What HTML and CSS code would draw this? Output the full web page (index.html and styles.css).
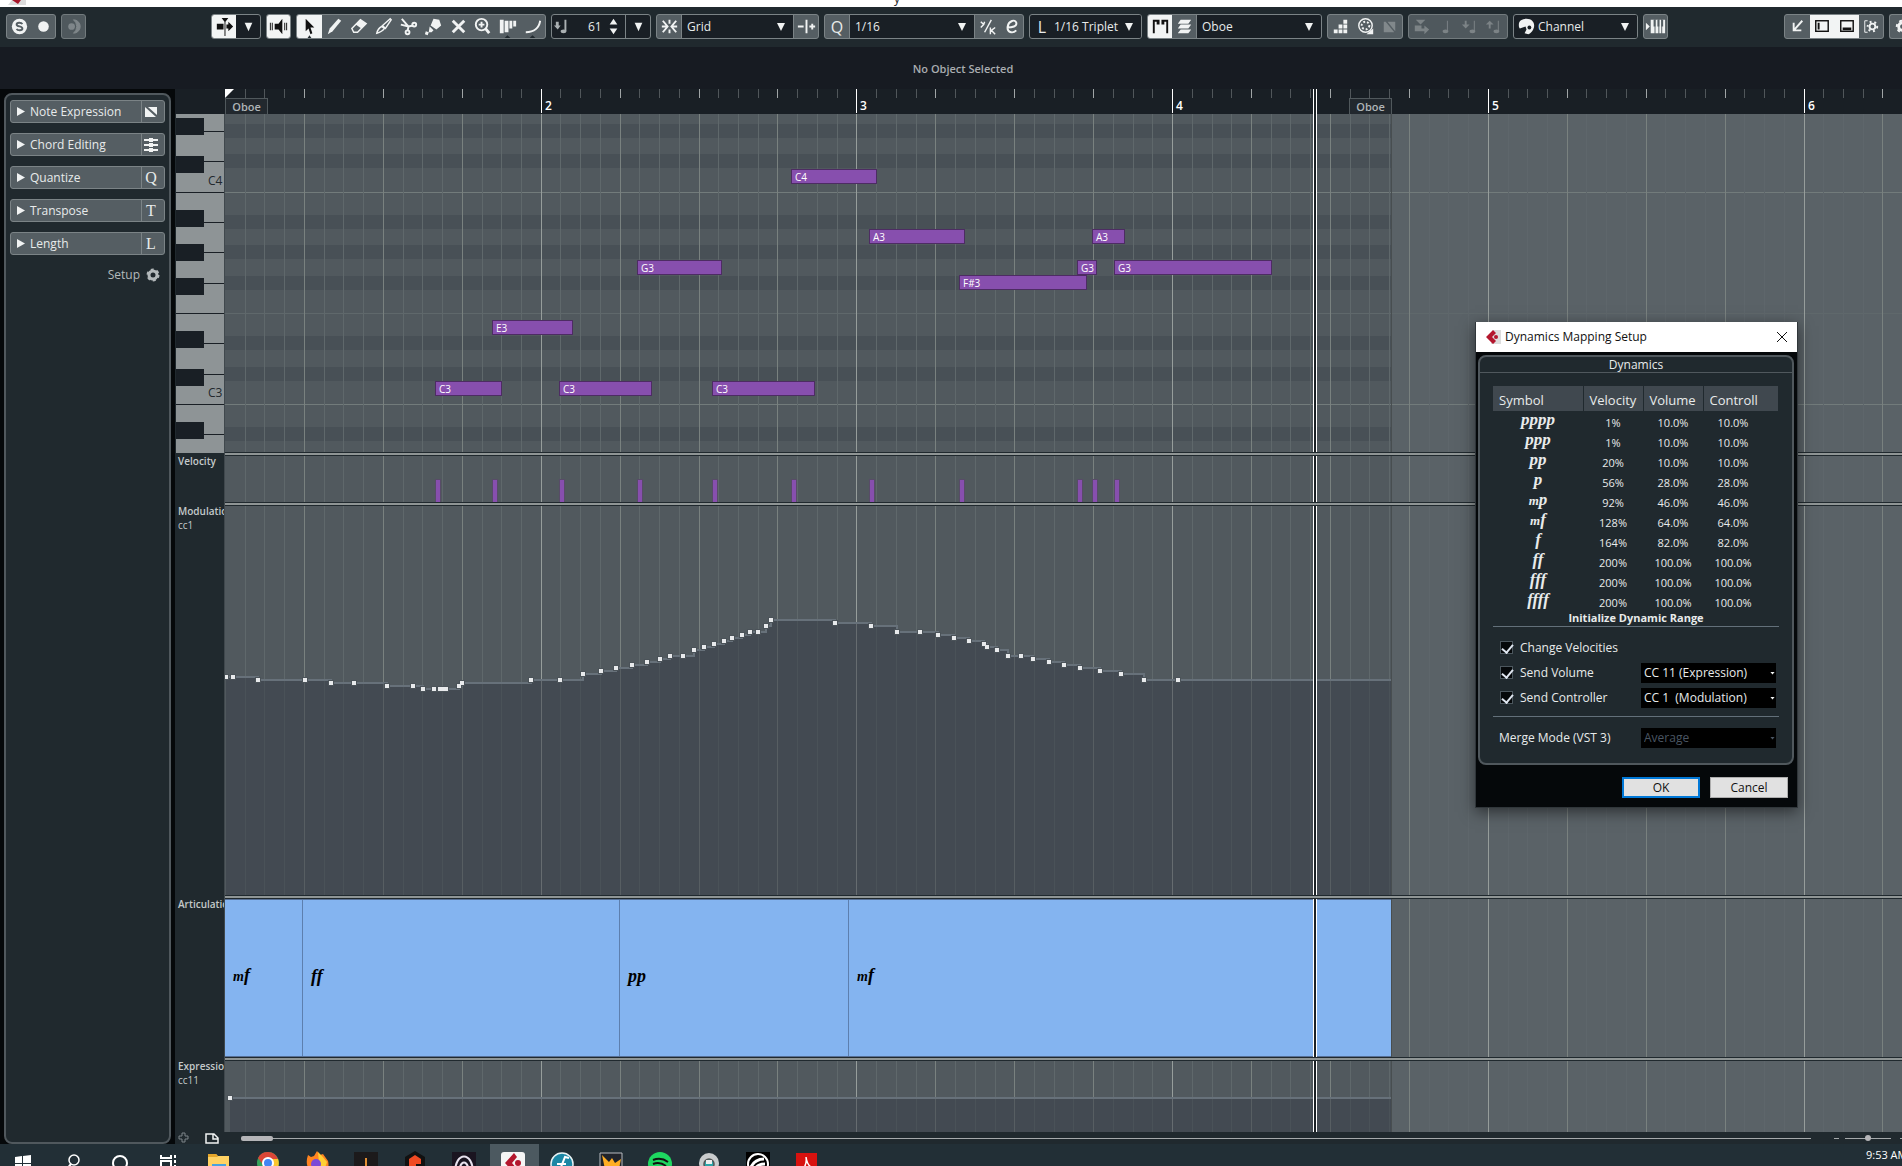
FILE: index.html
```html
<!DOCTYPE html>
<html lang="en">
<head>
  <meta charset="UTF-8" />
  <meta name="viewport" content="width=device-width, initial-scale=1.0" />
  <title>Key Editor</title>
  <link rel="stylesheet" href="styles.css">
</head>
<body>
  <div class="titlebar">
    <svg class="title-icon" width="18" height="7" viewBox="0 0 18 7"><path d="M4 0h14v5H0z" fill="#ddd"/><path d="M4 0h9l-3 4-3-2z" fill="#a8172b"/></svg>
    <span class="title-text">y</span>
  </div>

  <header class="toolbar">
    <div class="group w50">
      <button aria-label="Solo"><svg viewBox="0 0 24 24"><circle cx="12" cy="12" r="8" fill="#f1f3f3"/><path d="M15 9.500c-1-2-6-2-6 .3 0 2.600 6 1.600 6 4.300 0 2.400-5 2.400-6 .3" fill="none" stroke="#555e63" stroke-width="2"/></svg></button>
      <button aria-label="Record"><svg viewBox="0 0 24 24"><circle cx="12" cy="12" r="5.500" fill="#f1f3f3"/></svg></button>
    </div>
    <div class="group off w25">
      <button aria-label="Retrospective record"><svg viewBox="0 0 24 24"><circle cx="10" cy="12" r="3.500" fill="#8a9194"/><path d="M12 5a7 7 0 0 1 0 14 9 9 0 0 0 0-14z" fill="#8a9194" stroke="#8a9194"/></svg></button>
    </div>

    <div class="group dark w50 after-space">
      <button class="on" aria-label="Auto-scroll"><svg viewBox="0 0 24 24"><path d="M4 9h7v6H4zM9 3h7l-3 4v15h-1V7zM14 10h2V7l5 5-5 5v-3h-2z" fill="#111"/></svg></button>
      <button aria-label="Auto-scroll options"><svg viewBox="0 0 24 24"><path d="M8 8h8l-4 9z" fill="#f1f3f3"/></svg></button>
    </div>
    <div class="group w25">
      <button class="on" aria-label="Acoustic feedback"><svg viewBox="0 0 24 24"><path d="M8 9h4l4-5v16l-4-5H8zM3 8h1v8H3zM5 8h1v8H5zM18 8h1v8h-1zM20 8h1v8h-1z" fill="#111"/></svg></button>
    </div>
    <div class="group w250">
      <button class="on" aria-label="Select"><svg viewBox="0 0 24 24"><path d="M8 4l9 9h-4l2 6-2 1-2-6-3 3z" fill="#111"/><path d="M10 24l2-3 2 3z" fill="#20292e"/></svg></button>
      <button aria-label="Draw"><svg viewBox="0 0 24 24"><path d="M5 20l2-6 9-10 3 2-9 11z" fill="#f1f3f3"/></svg></button>
      <button aria-label="Erase"><svg viewBox="0 0 24 24"><path d="M5 14l9-9 6 4-9 9H7z" fill="none" stroke="#f1f3f3" stroke-width="1.500"/><path d="M9 10l5-5 6 4-5 5z" fill="#f1f3f3"/></svg></button>
      <button aria-label="Trim"><svg viewBox="0 0 24 24"><path d="M5 19c1-4 3-6 5-7l3 2c-2 3-4 4-8 5zM11 11l8-7 1 1-6 9z" fill="none" stroke="#f1f3f3" stroke-width="1.500"/></svg></button>
      <button aria-label="Split"><svg viewBox="0 0 24 24"><path d="M5 4l7 8-1 5M4 10l8 2 5-1" fill="none" stroke="#f1f3f3" stroke-width="2"/><circle cx="18" cy="10" r="2" fill="none" stroke="#f1f3f3" stroke-width="2"/><circle cx="11" cy="18" r="2" fill="none" stroke="#f1f3f3" stroke-width="2"/></svg></button>
      <button aria-label="Glue"><svg viewBox="0 0 24 24"><path d="M12 4l6 1 2 6-5 4-6-4zM8 12l4 4-2 2H7zM4 17l3 1-1 3-3-1z" fill="#f1f3f3"/></svg></button>
      <button aria-label="Mute"><svg viewBox="0 0 24 24"><path d="M6 6l12 12M18 6L6 18" stroke="#f1f3f3" stroke-width="3"/></svg></button>
      <button aria-label="Zoom"><svg viewBox="0 0 24 24"><circle cx="11" cy="10" r="6" fill="none" stroke="#f1f3f3" stroke-width="2"/><path d="M8 10h6M11 7v6" stroke="#f1f3f3" stroke-width="2"/><path d="M15 14l4 5" stroke="#f1f3f3" stroke-width="3"/></svg></button>
      <button aria-label="Time warp"><svg viewBox="0 0 24 24"><path d="M4 5h4v14H4zM9 6h4v12H9zM14 6h3v8h-3zM18 6h3v6h-3z" fill="#f1f3f3"/><path d="M9 24l3-3 3 3z" fill="#20292e"/></svg></button>
      <button aria-label="Line"><svg viewBox="0 0 24 24"><path d="M5 18c9 0 14-5 15-12" fill="none" stroke="#f1f3f3" stroke-width="2"/><path d="M9 24l3-3 3 3z" fill="#20292e"/></svg></button>
    </div>

    <div class="group dark w100">
      <label class="mark" for="vel"><svg viewBox="0 0 24 24"><path d="M4 7h3v4h2l-3 4-4-4h2z" fill="#aab0b2"/><path d="M14 5v12" stroke="#aab0b2" stroke-width="2"/><ellipse cx="12" cy="17" rx="3" ry="2" fill="#aab0b2"/></svg></label>
      <input class="vel" id="vel" type="text" value="61">
      <button class="spin" aria-label="Change velocity"><svg viewBox="0 0 24 24"><path d="M8 10l4-6 4 6zM8 14h8l-4 6z" fill="#f1f3f3"/></svg></button>
      <button class="cell" aria-label="Velocity presets"><svg viewBox="0 0 24 24"><path d="M8 8h8l-4 9z" fill="#f1f3f3"/></svg></button>
    </div>

    <div class="group w163">
      <button aria-label="Snap"><svg viewBox="0 0 24 24"><path d="M12 5v4M12 15v4M5 6l5 6-5 6M19 6l-5 6 5 6M4 12h5M15 12h5" fill="none" stroke="#f1f3f3" stroke-width="2"/></svg></button>
      <div class="drop"><select aria-label="Snap type"><option>Grid</option></select></div>
      <button aria-label="Snap relative"><svg viewBox="0 0 24 24"><path d="M3 12h6M12 5v14M15 12h6M18 9v6" fill="none" stroke="#f1f3f3" stroke-width="2"/></svg></button>
    </div>
    <div class="group w200">
      <button class="letter" aria-label="Apply quantize">Q</button>
      <div class="drop"><select aria-label="Quantize preset"><option>1/16</option></select></div>
      <button aria-label="Iterative quantize"><svg viewBox="0 0 24 24"><path d="M5 7l3 3-3 3M9 7l-1 3M16 5L9 18M15 13v7M20 13l-4 3 4 4" fill="none" stroke="#f1f3f3" stroke-width="1.500"/></svg></button>
      <button aria-label="Quantize panel"><svg viewBox="0 0 24 24"><path d="M7 13c6 0 11-1 10-5s-8-2-9 4 5 8 9 4" fill="none" stroke="#f1f3f3" stroke-width="2"/></svg></button>
    </div>
    <div class="group dark w113">
      <span class="mark letter">L</span>
      <div class="drop tight"><select aria-label="Length quantize"><option>1/16 Triplet</option></select></div>
    </div>
    <div class="group w175">
      <button class="on" aria-label="Edit active part"><svg viewBox="0 0 24 24"><path d="M4 5h7v5H8V7H6v12H4zM13 5h7v14h-2V7h-2v3h-3z" fill="#111"/></svg></button>
      <button aria-label="Part borders"><svg viewBox="0 0 24 24"><path d="M8 5h11l-3 4H5zM8 10h11l-3 4H5zM8 15h11l-3 4H5z" fill="#f1f3f3"/></svg></button>
      <div class="drop"><select aria-label="Active part"><option>Oboe</option></select></div>
    </div>
    <div class="group w76">
      <button aria-label="Step input"><svg viewBox="0 0 24 24"><path d="M5 15h4v4H5zM10 15h4v4h-4zM15 15h4v4h-4zM10 10h4v4h-4zM15 10h4v4h-4zM15 5h4v4h-4z" fill="#f1f3f3"/></svg></button>
      <button aria-label="MIDI input"><svg viewBox="0 0 24 24"><circle cx="12" cy="11" r="7" fill="none" stroke="#f1f3f3" stroke-width="1.500"/><circle cx="12" cy="11" r="4" fill="none" stroke="#f1f3f3" stroke-width="2" stroke-dasharray="2 2"/><path d="M13 20l7-6v6z" fill="#f1f3f3"/></svg></button>
      <button class="off" aria-label="Note expression input"><svg viewBox="0 0 24 24"><path d="M6 7h2l9 11H6zM10 7h8v10z" fill="#868d90"/></svg></button>
    </div>
    <div class="group off w100">
      <button aria-label="Move insert position"><svg viewBox="0 0 24 24"><path d="M6 5h10l-5 5zM5 11h7v3h3v-3l5 4-5 5v-3H5z" fill="#868d90"/></svg></button>
      <button aria-label="Record pitch"><svg viewBox="0 0 24 24"><path d="M14 6v11" stroke="#868d90"/><ellipse cx="12" cy="17" rx="3" ry="2" fill="#868d90"/></svg></button>
      <button aria-label="Record velocity"><svg viewBox="0 0 24 24"><path d="M6 6h2v4h3l-4 4-4-4h3z" fill="#868d90"/><path d="M16 6v11" stroke="#868d90"/><ellipse cx="14" cy="17" rx="3" ry="2" fill="#868d90"/></svg></button>
      <button aria-label="Record release velocity"><svg viewBox="0 0 24 24"><path d="M6 14h2v-4h3L7 6l-4 4h3z" fill="#868d90"/><path d="M16 6v11" stroke="#868d90"/><ellipse cx="14" cy="17" rx="3" ry="2" fill="#868d90"/></svg></button>
    </div>
    <div class="group dark w125">
      <span class="mark"><svg viewBox="0 0 24 24"><path d="M4 10c0-4 4-6 8-6 5 0 8 3 8 7s-3 8-6 9l-4-1 2-4-1-3-3 1-3 1c-1-1-1-2-1-4z" fill="#f1f3f3"/><circle cx="15" cy="13" r="2" fill="#191f25"/></svg></span>
      <div class="drop"><select aria-label="Event colors"><option>Channel</option></select></div>
    </div>
    <div class="group w25">
      <button aria-label="Edit VST instrument"><svg viewBox="0 0 24 24"><path d="M2 8l4 4-4 4zM7 5h4v14H7zM12 5h3v14h-3zM16 5h2v14h-2zM19 5h3v14h-3z" fill="#f1f3f3"/><path d="M10 5h2v7h-2zM14 5h2v7h-2zM18 5h2v7h-2z" fill="#555e63"/></svg></button>
    </div>

    <div class="group w100 push">
      <button aria-label="Open in separate window"><svg viewBox="0 0 24 24"><path d="M17 6l-8 9M8 8v8h8" fill="none" stroke="#f1f3f3" stroke-width="2"/></svg></button>
      <button class="on" aria-label="Show left zone"><svg viewBox="0 0 24 24"><rect x="6" y="6" width="13" height="11" fill="none" stroke="#111" stroke-width="1.500"/><path d="M8 8h2v7H8z" fill="#111"/></svg></button>
      <button class="on" aria-label="Show lower zone"><svg viewBox="0 0 24 24"><rect x="6" y="6" width="13" height="11" fill="none" stroke="#111" stroke-width="1.500"/><path d="M8 13h9v3H8z" fill="#111"/></svg></button>
      <button aria-label="Zone setup"><svg viewBox="0 0 24 24"><path d="M9 6H6v12h3" fill="none" stroke="#f1f3f3"/><circle cx="14" cy="12" r="3" fill="none" stroke="#f1f3f3" stroke-width="2"/><circle cx="14" cy="12" r="5" fill="none" stroke="#f1f3f3" stroke-width="2" stroke-dasharray="2 3"/></svg></button>
    </div>
    <div class="group cut">
      <button aria-label="Toolbar setup"><svg viewBox="0 0 24 24"><circle cx="12" cy="12" r="4" fill="none" stroke="#f1f3f3" stroke-width="3"/><circle cx="12" cy="12" r="6" fill="none" stroke="#f1f3f3" stroke-width="2" stroke-dasharray="3 3"/></svg></button>
    </div>
  </header>

  <div class="infoline">No Object Selected</div>

  <main class="workspace">
    <aside class="side">
      <div class="inspector">
        <button class="section"><span class="name">Note Expression</span><span class="glyph"><svg width="14" height="12" viewBox="0 0 14 12"><path d="M1 1l11 10H1zM4 1h9v8z" fill="#f1f3f3"/></svg></span></button>
        <button class="section"><span class="name">Chord Editing</span><span class="glyph"><svg width="16" height="14" viewBox="0 0 16 14"><path d="M1 2h14M1 7h14M1 12h14" stroke="#f1f3f3" stroke-width="2"/><path d="M6 0h4v4H6zM6 5h4v4H6zM6 10h4v4H6z" fill="#f1f3f3"/></svg></span></button>
        <button class="section"><span class="name">Quantize</span><span class="glyph">Q</span></button>
        <button class="section"><span class="name">Transpose</span><span class="glyph">T</span></button>
        <button class="section"><span class="name">Length</span><span class="glyph">L</span></button>
        <button class="setup">Setup <svg width="14" height="14" viewBox="0 0 14 14"><circle cx="7" cy="7" r="4" fill="none" stroke="#b3b9bb" stroke-width="3"/><circle cx="7" cy="7" r="5.500" fill="none" stroke="#b3b9bb" stroke-width="2" stroke-dasharray="2.880 2.880"/></svg></button>
      </div>
    </aside>

    <section class="editor">
      <div class="row ruler-row">
        <div class="head"></div>
        <div class="ruler" id="ruler"><svg class="grid"></svg></div>
      </div>
      <div class="row piano-row">
        <div class="head"><svg id="keys" width="49" height="339"></svg></div>
        <div class="lane" id="piano"><svg class="grid"></svg></div>
      </div>
      <div class="row cc-row velocity-row">
        <div class="head"><b>Velocity</b></div>
        <div class="lane" id="velocity"><svg class="grid"></svg></div>
      </div>
      <div class="row cc-row modulation-row">
        <div class="head"><b>Modulation</b><span>cc1</span></div>
        <div class="lane" id="modulation"><svg class="grid"></svg></div>
      </div>
      <div class="row cc-row articulation-row">
        <div class="head"><b>Articulations</b></div>
        <div class="lane" id="articulation"><svg class="grid"></svg><div class="dynamics" id="dynamics"></div></div>
      </div>
      <div class="row cc-row expression-row">
        <div class="head"><b>Expression</b><span>cc11</span></div>
        <div class="lane" id="expression"><svg class="grid"></svg></div>
      </div>
      <div class="scroll-row">
        <svg width="12" height="12" viewBox="0 0 12 12"><path d="M4 1h3v3h3v3H7v3H4V7H1V4h3z" fill="none" stroke="#7d8589"/></svg>
        <svg class="page" width="14" height="12" viewBox="0 0 14 12"><path d="M1 2h8l4 4v5H1zM8 2v5h5" fill="none" stroke="#f1f3f3" stroke-width="1.500"/></svg>
        <div class="track"><div class="thumb"></div></div>
        <span class="minus"></span>
        <div class="zoom"><div class="knob"></div></div>
        <span class="plus"></span>
      </div>
    </section>
  </main>

  <footer class="taskbar">
    <a href="#" aria-label="Start"><svg viewBox="0 0 24 24"><path d="M4 7l7-1v7H4zM12 6l8-1v8h-8zM4 14h7v7H4zM12 14h8v7h-8z" fill="#fff"/></svg></a>
    <a href="#" aria-label="Search"><svg viewBox="0 0 24 24"><circle cx="14" cy="10" r="5" fill="none" stroke="#fff" stroke-width="1.500"/><path d="M11 14l-5 6" stroke="#fff" stroke-width="2"/></svg></a>
    <a href="#" aria-label="Cortana"><svg viewBox="0 0 24 24"><circle cx="11" cy="13" r="7" fill="none" stroke="#fff" stroke-width="2"/></svg></a>
    <a href="#" aria-label="Task view"><svg viewBox="0 0 24 24"><path d="M3 5v3h10V5M3 20v-9h10v9M17 5v3M17 10v3M17 15v5" fill="none" stroke="#fff" stroke-width="2"/></svg></a>
    <a href="#" aria-label="Files"><svg viewBox="0 0 24 24"><path d="M1 4h8l2 2h11v16H1z" fill="#ffd263"/><path d="M1 4h8l2 3H1z" fill="#e5a62b"/><path d="M5 14h14v8H5z" fill="#48a2df"/></svg></a>
    <a href="#" aria-label="Chrome"><svg viewBox="0 0 24 24"><circle cx="12" cy="13" r="11" fill="#34a35a"/><path d="M2 8a11 11 0 0 1 20 1H12l-4 7z" fill="#dc4637"/><path d="M22 9a11 11 0 0 1-9 15l4-10-5-5z" fill="#fbc62f"/><circle cx="12" cy="13" r="5" fill="#4285f4" stroke="#fff" stroke-width="2"/></svg></a>
    <a href="#" aria-label="Firefox"><svg viewBox="0 0 24 24"><path d="M3 5l3 2 3-1 3-5 3 4 3-1 5 7c2 7-2 13-9 13C5 24-1 16 3 5z" fill="#ff8421"/><path d="M13 2l4 4 5 6-3 9-5-8z" fill="#ffcf35"/><circle cx="11" cy="14" r="5" fill="#7b4ad8"/></svg></a>
    <a href="#" aria-label="Meter"><svg viewBox="0 0 24 24"><path d="M0 2h24v22H0z" fill="#1c1a1b"/><path d="M7 24v-6M12 24V8M17 24v-8" stroke="#e59033" stroke-width="2"/></svg></a>
    <a href="#" aria-label="Hexagon"><svg viewBox="0 0 24 24"><path d="M12 1l10 6v17H2V7z" fill="#111"/><path d="M12 5l6 4v5h-5v10H6V9z" fill="#f04a23"/></svg></a>
    <a href="#" aria-label="Arch"><svg viewBox="0 0 24 24"><path d="M0 2h24v22H0z" fill="#1a1420"/><path d="M3 23c0-22 18-22 18 0M7 23c1-14 9-14 10 0" fill="none" stroke="#e8e2ee" stroke-width="2"/></svg></a>
    <a class="active" href="#" aria-label="Cubase"><svg viewBox="0 0 24 24"><rect y="2" width="24" height="26" rx="3" fill="#f5f5f5"/><path d="M13 3L4 13l9 10 3-4-5-6 5-6z" fill="#b4172e"/><circle cx="17" cy="13" r="3" fill="#b4172e"/></svg></a>
    <a href="#" aria-label="Dorico"><svg viewBox="0 0 24 24"><circle cx="12" cy="14" r="11" fill="#1b87a5" stroke="#e8f2f4" stroke-width="1.500"/><path d="M9 22l6-15 4 1M7 14h9" fill="none" stroke="#fff" stroke-width="2"/></svg></a>
    <a href="#" aria-label="Crown"><svg viewBox="0 0 24 24"><path d="M1 3h22v21H1z" fill="#20232a" stroke="#b8bcc0"/><path d="M3 5l7 7 3-4 3 5 6-4-3 15H7z" fill="#ffae23"/></svg></a>
    <a href="#" aria-label="Spotify"><svg viewBox="0 0 24 24"><circle cx="12" cy="14" r="12" fill="#1ed760"/><path d="M5 10c5-2 11-1 15 2M5 14c5-2 9-1 13 2M6 18c4-1 7-1 11 2" fill="none" stroke="#111" stroke-width="2"/></svg></a>
    <a href="#" aria-label="Disc"><svg viewBox="0 0 24 24"><circle cx="12" cy="13" r="10" fill="#c9cccd"/><circle cx="12" cy="14" r="5" fill="#2aa5a8" stroke="#555" stroke-width="1.500"/><path d="M9 10h6v4H9z" fill="#eee"/></svg></a>
    <a href="#" aria-label="Leaf"><svg viewBox="0 0 24 24"><path d="M0 2h24v22H0z" fill="#000"/><circle cx="12" cy="14" r="10" fill="none" stroke="#fff" stroke-width="2"/><path d="M5 17c3-6 7-8 13-8M8 20c3-5 6-6 11-6" fill="none" stroke="#fff" stroke-width="3"/></svg></a>
    <a href="#" aria-label="PDF reader"><svg viewBox="0 0 24 24"><path d="M1 3h21v21H1z" fill="#d8120f"/><path d="M5 22c5-4 7-9 6-15 1 7 4 11 9 11-6 0-10 1-15 4z" fill="none" stroke="#fff" stroke-width="1.500"/></svg></a>
    <span class="clock">9:53 AM</span>
  </footer>

  <div class="dialog" role="dialog" aria-label="Dynamics Mapping Setup">
    <div class="dialog-title">
      <svg width="16" height="16" viewBox="0 0 16 16"><path d="M8 1h8v14H6z" fill="#ddd"/><path d="M8 1L1 8l7 7 3-3-4-4 4-4z" fill="#b4172e"/><circle cx="11" cy="8" r="2" fill="#b4172e"/></svg>
      <span>Dynamics Mapping Setup</span>
      <button class="close" aria-label="Close"><svg width="12" height="12" viewBox="0 0 12 12"><path d="M1 1l10 10M11 1L1 11" stroke="#111"/></svg></button>
    </div>
    <div class="panel">
      <h2>Dynamics</h2>
      <div class="panel-body">
        <table>
          <thead>
            <tr><th>Symbol</th><th>Velocity</th><th>Volume</th><th><span>Controller</span></th></tr>
          </thead>
          <tbody>
            <tr><td>pppp</td><td>1%</td><td>10.0%</td><td>10.0%</td></tr>
            <tr><td>ppp</td><td>1%</td><td>10.0%</td><td>10.0%</td></tr>
            <tr><td>pp</td><td>20%</td><td>10.0%</td><td>10.0%</td></tr>
            <tr><td>p</td><td>56%</td><td>28.0%</td><td>28.0%</td></tr>
            <tr><td><small>m</small>p</td><td>92%</td><td>46.0%</td><td>46.0%</td></tr>
            <tr><td><small>m</small>f</td><td>128%</td><td>64.0%</td><td>64.0%</td></tr>
            <tr><td>f</td><td>164%</td><td>82.0%</td><td>82.0%</td></tr>
            <tr><td>ff</td><td>200%</td><td>100.0%</td><td>100.0%</td></tr>
            <tr><td>fff</td><td>200%</td><td>100.0%</td><td>100.0%</td></tr>
            <tr><td>ffff</td><td>200%</td><td>100.0%</td><td>100.0%</td></tr>
          </tbody>
        </table>
        <h3>Initialize Dynamic Range</h3>
        <div class="options">
          <div class="option"><input type="checkbox" id="chVel" checked><label for="chVel">Change Velocities</label></div>
          <div class="option"><input type="checkbox" id="chVol" checked><label for="chVol">Send Volume</label><div class="pick"><select aria-label="Volume controller"><option>CC 11 (Expression)</option></select></div></div>
          <div class="option"><input type="checkbox" id="chCtl" checked><label for="chCtl">Send Controller</label><div class="pick"><select aria-label="Controller"><option>CC 1 &nbsp;(Modulation)</option></select></div></div>
        </div>
        <div class="option merge"><label for="merge">Merge Mode (VST 3)</label><div class="pick"><select id="merge" disabled><option>Average</option></select></div></div>
      </div>
    </div>
    <div class="dialog-buttons">
      <button class="default">OK</button>
      <button>Cancel</button>
    </div>
  </div>

  <script src="script.js"></script>
</body>
</html>
```
FILE: styles.css
```css
* {
  box-sizing: border-box;
}
html, body {
  height: 100%;
  margin: 0;
}
body {
  display: flex;
  flex-direction: column;
  overflow: hidden;
  background: #05080a;
  color: #e8ebeb;
  font-family: "Open Sans", "Noto Sans", sans-serif;
  font-size: 12px;
  line-height: 16px;
}
button, input, select {
  margin: 0;
  padding: 0;
  border: 0;
  border-radius: 0;
  background: none;
  color: inherit;
  font: inherit;
}
svg {
  display: block;
  flex: none;
}

/* top */
.titlebar {
  position: relative;
  height: 7px;
  flex: none;
  overflow: hidden;
  background: #fff;
}
.title-icon {
  margin-left: 8px;
}
.title-text {
  position: absolute;
  left: 47%;
  bottom: 0;
  color: #222;
}
.toolbar {
  display: flex;
  align-items: center;
  gap: 5px;
  height: 40px;
  flex: none;
  padding-left: 6px;
  padding-bottom: 1px;
  background: #20292e;
}
.group {
  display: flex;
  flex: none;
  height: 25px;
  border: 1px solid #7b8386;
  border-radius: 3px;
  background: #555e63;
  overflow: hidden;
}
.group button,
.mark {
  display: flex;
  flex: 1 0 0;
  align-items: center;
  justify-content: center;
  min-width: 0;
}
.group svg {
  width: 23px;
  height: 23px;
}
.group .on {
  background: #f2f4f4;
}
.group.dark,
.drop {
  background: #191f25;
}
.off {
  opacity: 0.9;
}
.w25 { width: 25px; }
.w50 { width: 50px; }
.w76 { width: 76px; }
.w100 { width: 100px; }
.w113 { width: 113px; }
.w125 { width: 125px; }
.w163 { width: 163px; }
.w175 { width: 175px; }
.w200 { width: 200px; }
.w250 { width: 250px; }
.after-space {
  margin-left: 120px;
}
.push {
  margin-left: auto;
}
.cut {
  width: 13px;
  border-right: 0;
  border-radius: 3px 0 0 3px;
}
.group.cut button {
  flex: none;
  width: 24px;
}
.w163 > button, .w200 > button, .w175 > button,
.w113 > .mark, .w125 > .mark {
  flex: 0 0 24px;
}
.letter {
  font-size: 16px;
}
.drop {
  position: relative;
  flex: 1;
  border: 0 solid #7b8386;
  border-width: 0 1px;
}
.dark .drop,
.drop:last-child {
  border-right: 0;
}
.dark .drop {
  border-left: 0;
}
.drop select {
  width: 100%;
  height: 23px;
  padding-left: 5px;
  appearance: none;
}
.w125 .drop select {
  padding-left: 0;
}
.drop.tight select {
  padding-left: 0;
}
.drop::after {
  content: "";
  position: absolute;
  top: 8px;
  right: 8px;
  width: 8px;
  height: 8px;
  background: #f1f3f3;
  clip-path: polygon(0 0, 100% 0, 50% 100%);
  pointer-events: none;
}
.vel {
  width: 26px;
  text-align: right;
}
.group .cell {
  border-left: 1px solid #7b8386;
}
.infoline {
  height: 42px;
  flex: none;
  padding: 14px 0 0 24px;
  background: #171b22;
  color: #a9adb0;
  font-size: 11px;
  font-weight: 600;
  text-align: center;
}

/* left zone */
.workspace {
  display: flex;
  flex: 1;
  min-height: 0;
}
.side {
  display: flex;
  width: 175px;
  flex: none;
  padding: 4px 4px 0;
}
.inspector {
  flex: 1;
  padding: 5px 4px;
  border: 2px solid #50585d;
  border-radius: 8px;
  background: #20292e;
}
.section {
  display: flex;
  align-items: center;
  width: 155px;
  height: 23px;
  margin-bottom: 10px;
  border: 1px solid #7b8386;
  border-radius: 3px;
  background: #555e63;
}
.section::before {
  content: "";
  width: 8px;
  height: 9px;
  margin: 0 5px 0 6px;
  background: #f1f3f3;
  clip-path: polygon(0 0, 100% 50%, 0 100%);
}
.section .name {
  flex: 1;
  text-align: left;
}
.section .glyph {
  display: flex;
  align-items: center;
  justify-content: center;
  width: 23px;
  height: 21px;
  padding-right: 4px;
  border-left: 1px solid #7b8386;
  font-family: "Liberation Serif", serif;
  font-size: 16px;
}
.setup {
  display: flex;
  align-items: center;
  gap: 6px;
  margin: 12px 5px 0 auto;
  color: #b3b9bb;
}

/* lanes */
.editor {
  display: flex;
  flex: 1;
  flex-direction: column;
  min-width: 0;
}
.row {
  display: flex;
  flex: none;
  min-height: 0;
  background: #20292e;
}
.ruler-row { height: 25px; }
.piano-row { height: 338px; }
.velocity-row { height: 50px; }
.modulation-row { flex: 1; }
.articulation-row { height: 162px; }
.expression-row { height: 75px; }
.head {
  width: 50px;
  flex: none;
  padding: 2px 0 0 3px;
  border-right: 1px solid #40484d;
  overflow: hidden;
  color: #c4c9cb;
  font-size: 10px;
  line-height: 14px;
}
.head b, .head span {
  display: block;
  white-space: nowrap;
}
.head b {
  font-weight: 600;
}
.piano-row .head {
  z-index: 1;
  height: 339px;
  padding: 0 0 0 1px;
}
.lane, .ruler {
  position: relative;
  flex: 1;
  min-width: 0;
  overflow: hidden;
  background: #5a6267;
}
.ruler-row .head,
.ruler {
  border: 0;
  background: #191f25;
}
.grid {
  position: absolute;
  inset: 0;
  width: 100%;
  height: 100%;
  overflow: hidden;
}
.cc-row {
  overflow: hidden;
}
.cc-row .lane {
  border-top: 4px solid #20292e;
  overflow: visible;
}
/* light line in the middle of the divider */
.cc-row .lane::before {
  content: "";
  position: absolute;
  top: -3px;
  left: 0;
  right: 0;
  height: 2px;
  background: #8f9595;
}
.num,
.part-tag {
  position: absolute;
  top: 9px;
  font-weight: 600;
}
.num {
  color: #fff;
}
.part-tag {
  width: 43px;
  height: 17px;
  border: 1px solid #50585c;
  background: #22282e;
  color: #b0b5b8;
  font-size: 11px;
  text-align: center;
}
.note {
  position: absolute;
  height: 15px;
  padding-left: 3px;
  border: 1px solid #4d2c63;
  background: #874fae;
  color: #fff;
  font-size: 10px;
  line-height: 14px;
  white-space: nowrap;
}
.dynamics {
  position: relative;
  display: flex;
  width: 1166px;
  height: 100%;
  border: 1px solid #566f96;
  border-width: 1px 0;
  background: #84b4f0;
}
.dynamics div {
  display: flex;
  align-items: center;
  flex: none;
  padding: 0 0 4px 8px;
  border-right: 1px solid #5d7fae;
}
.dynamics div:last-child {
  border-right: 0;
}
.dynamics span,
tbody td:first-child {
  font-family: "Liberation Serif", serif;
  font-weight: bold;
  font-style: italic;
}
.dynamics span {
  color: #000;
  font-size: 18px;
}
small {
  font-size: 14px;
}
.playhead {
  position: absolute;
  top: 0;
  bottom: 0;
  width: 4px;
  border: 1px solid #fff;
  border-width: 0 1px;
  background: #1c2226;
}
.scroll-row {
  display: flex;
  align-items: center;
  height: 12px;
  flex: none;
  padding-left: 3px;
  background: #20292e;
}
.page {
  margin: 0 22px 0 15px;
}
.track {
  display: flex;
  align-items: center;
  flex: 1;
  height: 12px;
  background: linear-gradient(#a5a9ab, #a5a9ab) center / 100% 1px no-repeat;
}
.thumb {
  width: 32px;
  height: 5px;
  border-radius: 2px;
  background: #b5b5b8;
}
.minus {
  width: 5px;
  height: 1px;
  margin: 0 6px 0 23px;
  background: #a5a9ab;
}
.zoom {
  display: flex;
  align-items: center;
  justify-content: center;
  width: 46px;
  height: 12px;
  background: linear-gradient(#a5a9ab, #a5a9ab) center / 100% 1px no-repeat;
}
.knob {
  width: 6px;
  height: 6px;
  border-radius: 50%;
  background: #b5b5b8;
}
.plus {
  width: 2px;
  height: 1px;
  margin-left: 9px;
  background: #a5a9ab;
}

/* taskbar */
.taskbar {
  display: flex;
  height: 22px;
  flex: none;
  overflow: hidden;
  background: #222f36;
}
.taskbar a {
  display: flex;
  justify-content: center;
  width: 49px;
  height: 40px;
  flex: none;
  padding: 6px 3px 0 0;
}
.taskbar a svg {
  width: 24px;
  height: 24px;
}
.taskbar .active {
  background: #4c5960;
}
.clock {
  width: 36px;
  margin-left: auto;
  padding-top: 3px;
  color: #fff;
  font-size: 11px;
  white-space: nowrap;
}

/* dialog */
.dialog {
  position: absolute;
  top: 322px;
  right: 104px;
  width: 323px;
  padding-bottom: 9px;
  border: 1px solid #30363a;
  border-top: 0;
  background: #05080a;
  box-shadow: 0 4px 14px rgba(0, 0, 0, 0.5);
}
.dialog-title {
  display: flex;
  align-items: center;
  gap: 4px;
  height: 30px;
  padding: 0 9px;
  background: #fff;
  color: #111;
}
.close {
  margin-left: auto;
}
.panel {
  height: 410px;
  margin: 3px 3px 0 2px;
  border: 2px solid #50585d;
  border-radius: 8px;
  background: #20292e;
}
.panel h2 {
  height: 16px;
  margin: 0;
  border-bottom: 1px solid #50585d;
  font-size: 12px;
  font-weight: normal;
  line-height: 15px;
  text-align: center;
}
.panel-body {
  padding: 13px 13px 0;
}
table {
  width: 285px;
  border-collapse: collapse;
  table-layout: fixed;
}
th {
  height: 25px;
  padding: 2px 0 0 6px;
  border-right: 1px solid #20292e;
  background: #40484f;
  font-size: 13px;
  font-weight: normal;
  text-align: left;
}
th:first-child { width: 90px; }
th:nth-child(2), th:nth-child(3) { width: 60px; }
th:last-child { border: 0; }
th span {
  display: block;
  width: 48px;
  overflow: hidden;
}
td {
  height: 20px;
  padding: 4px 0 0;
  font-size: 11px;
  text-align: center;
}
td:last-child {
  padding-right: 15px;
}
tbody td:first-child {
  padding: 0 0 2px;
  font-size: 17px;
  line-height: 12px;
}
td small {
  font-size: 13px;
}
.panel h3 {
  height: 16px;
  margin: 0;
  border-bottom: 1px solid #63707a;
  font-size: 11px;
  line-height: 14px;
  text-align: center;
}
.options {
  padding: 8px 0 6px;
  border-bottom: 1px solid #63707a;
}
.option {
  display: flex;
  align-items: center;
  height: 25px;
  padding: 0 3px 0 6px;
}
.option label {
  flex: 1;
}
input[type="checkbox"] {
  position: relative;
  width: 13px;
  height: 13px;
  margin: 0 7px 0 1px;
  border: 1px solid #4b565d;
  background: #05080a;
  appearance: none;
}
input[type="checkbox"]:checked::after {
  content: "";
  position: absolute;
  top: 0;
  left: 3px;
  width: 5px;
  height: 9px;
  border: solid #dfe6f0;
  border-width: 0 2px 2px 0;
  transform: rotate(40deg);
}
.merge {
  margin-top: 8px;
}
.pick {
  position: relative;
  width: 135px;
}
.pick select {
  display: block;
  width: 100%;
  height: 20px;
  padding-left: 3px;
  background: #000;
  appearance: none;
}
.pick select:disabled {
  color: #4a5663;
  opacity: 1;
}
.pick::after {
  content: "";
  position: absolute;
  top: 9px;
  right: 1px;
  width: 5px;
  height: 3px;
  background: #f1f3f3;
  clip-path: polygon(0 0, 100% 0, 50% 100%);
  pointer-events: none;
}
.merge .pick::after {
  background: #4a5663;
}
.dialog-buttons {
  display: flex;
  justify-content: flex-end;
  gap: 10px;
  padding: 12px 9px 0 0;
}
.dialog-buttons button {
  width: 78px;
  height: 21px;
  border: 1px solid #adadad;
  background: #e1e1e1;
  color: #111;
}
.dialog-buttons .default {
  border: 2px solid #0078d7;
}
```
FILE: script.js
```js
const NS = 'http://www.w3.org/2000/svg';
const BAR = 315.7;      // pixels per bar at this zoom
const PART_END = 1166;
const PLAYHEAD = 1088;

// name, start, row top, length
const notes = [
  ['C3', 210, 267, 67], ['E3', 267, 206, 81], ['C3', 334, 267, 93],
  ['G3', 412, 146, 85], ['C3', 487, 267, 103], ['C4', 566, 55, 86],
  ['A3', 644, 115, 96], ['F#3', 734, 161, 128], ['G3', 852, 146, 20],
  ['A3', 867, 115, 33], ['G3', 889, 146, 158]
];

const modulation = [
  [1, 171], [8, 171], [33, 174], [80, 174], [106, 177], [129, 177], [162, 180], [188, 180],
  [198, 183], [209, 183], [215, 183], [218, 183], [221, 183], [234, 180], [237, 177], [306, 174],
  [335, 174], [358, 168], [376, 165], [391, 162], [407, 159], [422, 156], [435, 153], [445, 150],
  [458, 150], [469, 144], [479, 141], [489, 138], [499, 135], [507, 132], [517, 129], [525, 126],
  [533, 126], [541, 120], [546, 114], [610, 117], [646, 120], [672, 126], [695, 126], [713, 129],
  [729, 132], [744, 135], [759, 138], [762, 141], [772, 144], [783, 150], [796, 150], [808, 153],
  [824, 156], [839, 159], [855, 162], [875, 165], [896, 168], [919, 174], [953, 174]
];

const dynamics = [['mf', 78], ['ff', 317], ['pp', 229], ['mf', 542]];

function rect(svg, x, y, w, h, fill) {
  const r = document.createElementNS(NS, 'rect');
  r.setAttribute('x', x);
  r.setAttribute('y', y);
  r.setAttribute('width', w);
  r.setAttribute('height', h);
  r.setAttribute('fill', fill);
  svg.appendChild(r);
}

function el(parent, cls, text, left) {
  const d = document.createElement('div');
  d.className = cls;
  d.textContent = text;
  d.style.left = left + 'px';
  parent.appendChild(d);
  return d;
}

const svgOf = id => document.querySelector('#' + id + ' .grid');
const ruler = document.getElementById('ruler');
const steps = Math.floor(ruler.clientWidth / BAR * 16);

function verticals(svg) {
  for (let i = 1; i <= steps; i++) {
    const x = Math.round(i * BAR / 16);
    let color = x < PART_END ? '#5f686b' : '#5e666b';
    if (i % 4 === 0) color = '#79817f';
    if (i % 16 === 0) color = '#969d9b';
    rect(svg, x, 0, 1, '100%', color);
  }
  rect(svg, PART_END, 0, 1, '100%', '#484e50');
}

function curve(svg, points) {
  let d = 'M' + points[0].join(' ');
  points.slice(1).forEach(p => { d += 'H' + p[0] + 'V' + p[1]; });
  d += 'H' + PART_END;
  const area = document.createElementNS(NS, 'path');
  area.setAttribute('d', d + 'V2000H' + points[0][0] + 'Z');
  area.setAttribute('fill', 'rgba(53,59,69,.5)');
  const line = document.createElementNS(NS, 'path');
  line.setAttribute('d', d);
  line.setAttribute('fill', 'none');
  line.setAttribute('stroke', '#67717a');
  line.setAttribute('stroke-width', 2);
  svg.append(area, line);
  points.forEach(p => rect(svg, p[0] - 3, p[1] - 3, 6, 6, '#4b5359'));
  points.forEach(p => rect(svg, p[0] - 2, p[1] - 2, 4, 4, '#e8eaec'));
}

['piano', 'velocity', 'modulation', 'expression', 'articulation'].forEach(id => {
  const svg = svgOf(id);
  rect(svg, 0, 0, PART_END, '100%', '#51595e');
  if (id === 'piano') {
    [10, 40, 101, 131, 162, 222, 253, 313].forEach(y => rect(svg, 0, y, PART_END, 14, '#485056'));
    rect(svg, 0, 199, '100%', 1, '#5f686b');
    rect(svg, 0, 78, '100%', 1, '#727b7b');
    rect(svg, 0, 290, '100%', 1, '#727b7b');
  }
  verticals(svg);
});

notes.forEach(([name, x, y, w]) => {
  const n = el(document.getElementById('piano'), 'note', name, x);
  n.style.top = y + 'px';
  n.style.width = w + 'px';
  rect(svgOf('velocity'), x, 23, 6, 24, '#584b68');
  rect(svgOf('velocity'), x + 1, 24, 4, 23, '#874fae');
});

curve(svgOf('modulation'), modulation);
curve(svgOf('expression'), [[5, 37]]);

dynamics.forEach(([text, w]) => {
  const d = document.createElement('div');
  d.style.width = w + 'px';
  d.innerHTML = '<span>' + text.replace('m', '<small>m</small>') + '</span>';
  document.getElementById('dynamics').appendChild(d);
});

// ruler
const rulerSvg = svgOf('ruler');
for (let i = 1; i <= steps; i++) {
  const x = Math.round(i * BAR / 16);
  if (i % 16 === 0) {
    rect(rulerSvg, x, 0, 1, 24, '#fff');
    el(ruler, 'num', i / 16 + 1, x + 4);
  } else {
    rect(rulerSvg, x, 0, 1, 9, i % 4 ? '#50565a' : '#a0a5a6');
  }
}
const flag = document.createElementNS(NS, 'path');
flag.setAttribute('d', 'M0 0h9L0 9z');
flag.setAttribute('fill', '#fff');
rulerSvg.appendChild(flag);
el(ruler, 'part-tag', 'Oboe', 0);
el(ruler, 'part-tag', 'Oboe', PART_END - 42);

document.querySelectorAll('.lane, .ruler').forEach(lane => el(lane, 'playhead', '', PLAYHEAD));

// keyboard
const keys = document.getElementById('keys');
rect(keys, 0, 0, 48, 339, '#8e9496');
[17, 47, 78, 108, 138, 169, 199, 229, 260, 290, 320].forEach(y => rect(keys, 0, y, 48, 1, '#191f25'));
[4, 42, 96, 130, 164, 217, 255, 308].forEach(y => rect(keys, 0, y, 28, 17, '#191f25'));
[['C4', 71], ['C3', 283]].forEach(([name, y]) => {
  const t = document.createElementNS(NS, 'text');
  t.setAttribute('x', 32);
  t.setAttribute('y', y);
  t.setAttribute('font-size', 12);
  t.setAttribute('fill', '#22282d');
  t.textContent = name;
  keys.appendChild(t);
});
```
